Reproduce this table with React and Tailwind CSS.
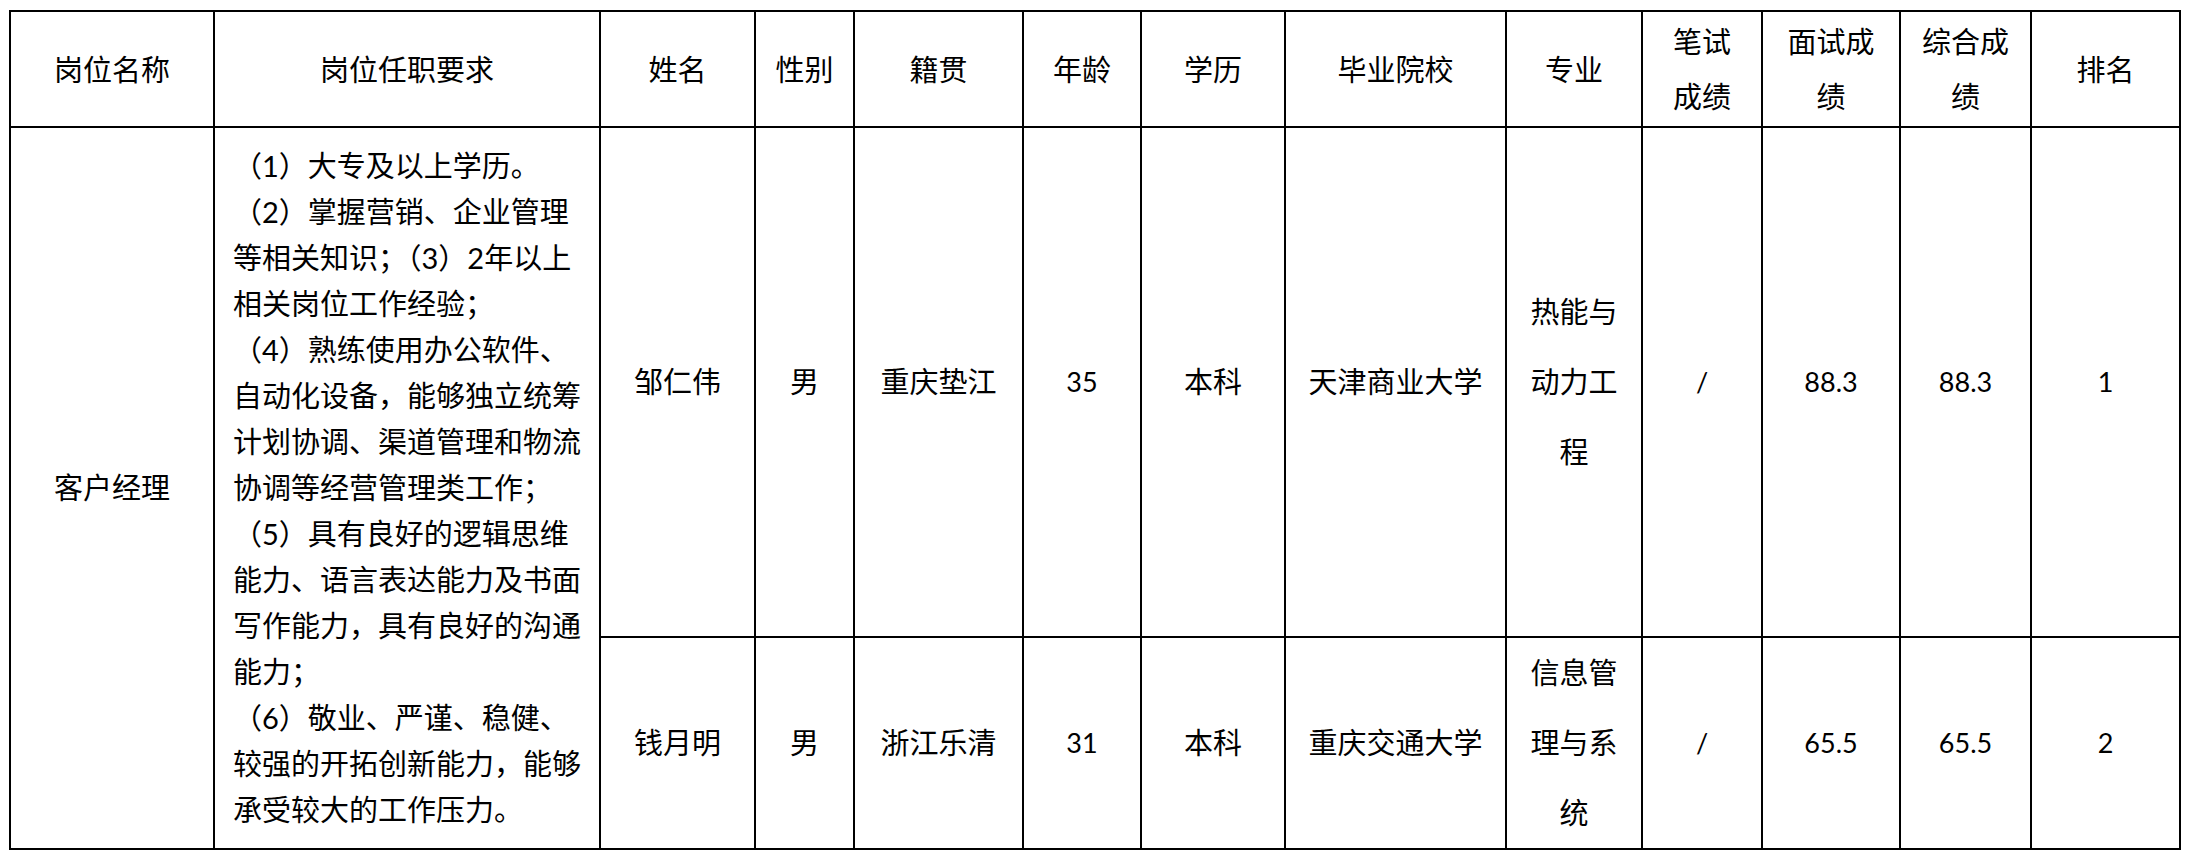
import React from "react";

const cell =
  "border-r-2 border-b-2 border-black flex items-center justify-center text-center";

const headers = [
  ["岗位名称"],
  ["岗位任职要求"],
  ["姓名"],
  ["性别"],
  ["籍贯"],
  ["年龄"],
  ["学历"],
  ["毕业院校"],
  ["专业"],
  ["笔试", "成绩"],
  ["面试成", "绩"],
  ["综合成", "绩"],
  ["排名"],
];

const reqLines = [
  "（1）大专及以上学历。",
  "（2）掌握营销、企业管理",
  "等相关知识；（3）2年以上",
  "相关岗位工作经验；",
  "（4）熟练使用办公软件、",
  "自动化设备，能够独立统筹",
  "计划协调、渠道管理和物流",
  "协调等经营管理类工作；",
  "（5）具有良好的逻辑思维",
  "能力、语言表达能力及书面",
  "写作能力，具有良好的沟通",
  "能力；",
  "（6）敬业、严谨、稳健、",
  "较强的开拓创新能力，能够",
  "承受较大的工作压力。",
];

const people = [
  {
    name: "邹仁伟",
    sex: "男",
    origin: "重庆垫江",
    age: "35",
    edu: "本科",
    school: "天津商业大学",
    major: ["热能与", "动力工", "程"],
    written: "/",
    interview: "88.3",
    total: "88.3",
    rank: "1",
  },
  {
    name: "钱月明",
    sex: "男",
    origin: "浙江乐清",
    age: "31",
    edu: "本科",
    school: "重庆交通大学",
    major: ["信息管", "理与系", "统"],
    written: "/",
    interview: "65.5",
    total: "65.5",
    rank: "2",
  },
];

function Cjk({ children }) {
  return <span className="text-[29px] leading-[46px]">{children}</span>;
}

function Num({ children }) {
  return <span className="text-[27px]">{children}</span>;
}

export default function App() {
  return (
    <div className="w-[2191px] h-[861px] bg-white text-black font-[Lato,'Noto_Sans_CJK_SC',sans-serif] pt-[10px] pl-[9px]">
      <div className="grid grid-cols-[204px_386px_155px_99px_169px_118px_144px_221px_136px_120px_138px_131px_149px] grid-rows-[116px_510px_212px] border-t-2 border-l-2 border-black w-max">
        {headers.map((h, i) => (
          <div key={i} className={cell}>
            <div className="text-[29px] leading-[55px]">
              {h.map((l, j) => (
                <div key={j} className="whitespace-nowrap">
                  {l}
                </div>
              ))}
            </div>
          </div>
        ))}

        <div className={`${cell} row-span-2`}>
          <span className="text-[29px]">客户经理</span>
        </div>
        <div className={`${cell} row-span-2`}>
          <div className="text-left text-[29px] leading-[46px] w-[348px]">
            {reqLines.map((l, i) => (
              <div key={i} className="whitespace-nowrap">
                {l}
              </div>
            ))}
          </div>
        </div>

        {people.map((p, i) => (
          <React.Fragment key={i}>
            <div className={cell}>
              <Cjk>{p.name}</Cjk>
            </div>
            <div className={cell}>
              <Cjk>{p.sex}</Cjk>
            </div>
            <div className={cell}>
              <Cjk>{p.origin}</Cjk>
            </div>
            <div className={cell}>
              <Num>{p.age}</Num>
            </div>
            <div className={cell}>
              <Cjk>{p.edu}</Cjk>
            </div>
            <div className={cell}>
              <Cjk>{p.school}</Cjk>
            </div>
            <div className={cell}>
              <div className="text-[29px] leading-[70px]">
                {p.major.map((l, j) => (
                  <div key={j} className="whitespace-nowrap">
                    {l}
                  </div>
                ))}
              </div>
            </div>
            <div className={cell}>
              <Num>{p.written}</Num>
            </div>
            <div className={cell}>
              <Num>{p.interview}</Num>
            </div>
            <div className={cell}>
              <Num>{p.total}</Num>
            </div>
            <div className={cell}>
              <Num>{p.rank}</Num>
            </div>
          </React.Fragment>
        ))}
      </div>
    </div>
  );
}
